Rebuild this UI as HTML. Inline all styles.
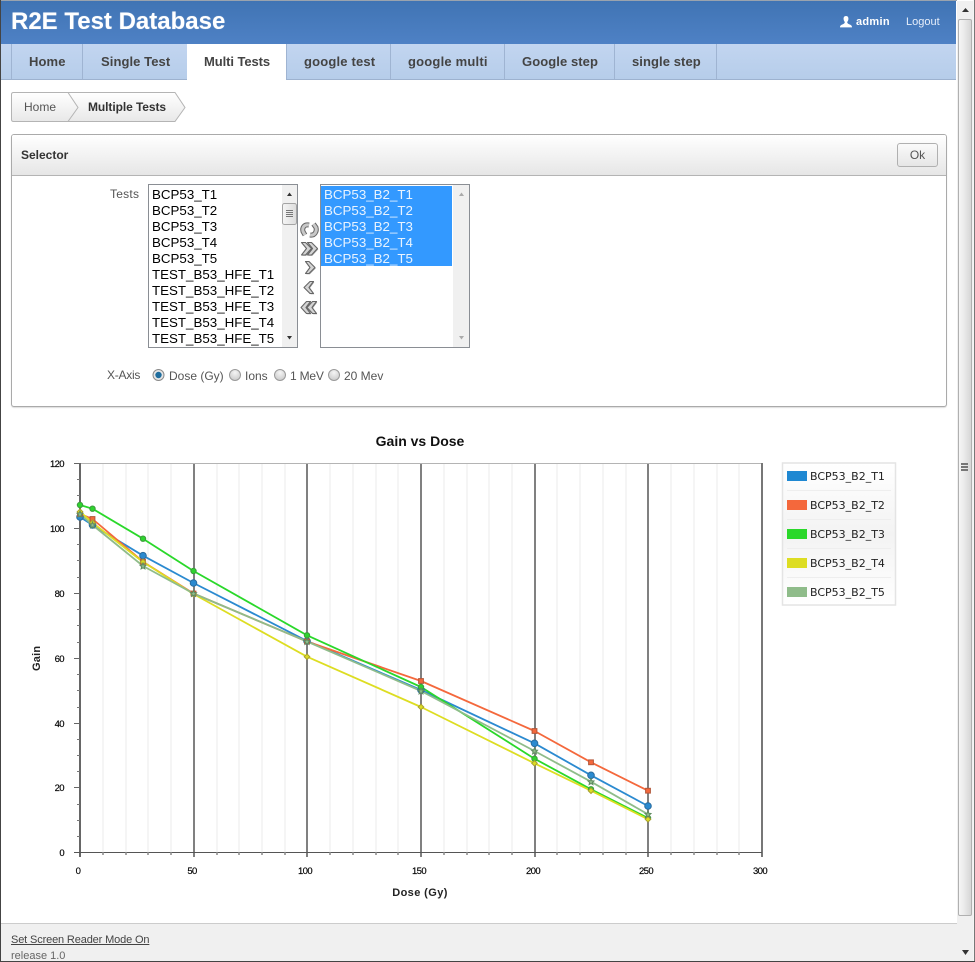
<!DOCTYPE html>
<html><head><meta charset="utf-8"><title>R2E Test Database</title>
<style>
html,body{margin:0;padding:0;background:#fff;width:975px;height:962px;overflow:hidden;font-family:"Liberation Sans",sans-serif}
div,span,a{position:absolute;white-space:nowrap;box-sizing:border-box}
.tab{top:44px;height:36px;line-height:36px;font-size:13px;font-weight:bold;color:#444;text-align:left;border-right:1px solid #9fb4d2}
.li{font-size:13.33px;line-height:16px;color:#000;left:4px}
.sb{background:#f0f0f0;top:1px;bottom:1px;width:16px}
.lbl{font-size:12px;color:#555;line-height:14px}
</style></head><body>
<div style="left:0;top:0;width:975px;height:962px;overflow:hidden">
<div style="left:0;top:0;width:957px;height:1px;background:#9aa3ae"></div>
<div style="left:1px;top:1px;width:955px;height:43px;background:linear-gradient(#4074b4,#4e81c5)"></div>
<div style="left:11px;top:8px;font-size:24px;line-height:28px;font-weight:bold;color:#fff;text-shadow:0 0 1px rgba(255,255,255,.4)">R2E Test Database</div>
<svg style="position:absolute;left:839px;top:15px" width="14" height="14" viewBox="0 0 14 14"><path d="M7 1C5 1 4.400 2.600 4.600 4.200C4.800 5.600 5.400 6.400 5.800 7C5.800 8.400 4.600 9 3 9.600C2 10 1 10.600 1 12.400H13C13 10.600 12 10 11 9.600C9.400 9 8.200 8.400 8.200 7C8.600 6.400 9.200 5.600 9.400 4.200C9.600 2.600 9 1 7 1Z" fill="#fff"/></svg>
<div style="left:856px;top:15px;font-size:11px;line-height:14px;font-weight:bold;color:#fff;letter-spacing:.3px">admin</div>
<div style="left:906px;top:15px;font-size:11px;line-height:14px;color:#e6eefa">Logout</div>

<div style="left:1px;top:44px;width:955px;height:36px;background:linear-gradient(#c2d5f0,#b6cdea);border-bottom:1px solid #9db2cf"></div>
<div style="left:11px;top:44px;width:1px;height:35px;background:#9fb4d2"></div>
<div class="tab" style="left:12px;width:71px;height:35px;padding-left:17px;letter-spacing:.1px">Home</div>
<div class="tab" style="left:83px;width:104px;height:35px;border-right:0;padding-left:18px;letter-spacing:.08px">Single Test</div>
<div class="tab" style="left:187px;width:99px;background:#fff;border-right:0;color:#444;padding-left:17px;letter-spacing:-.08px">Multi Tests</div>
<div class="tab" style="left:286px;width:105px;height:35px;border-left:1px solid #9fb4d2;padding-left:17px;letter-spacing:.18px">google test</div>
<div class="tab" style="left:391px;width:114px;height:35px;padding-left:17px;letter-spacing:.2px">google multi</div>
<div class="tab" style="left:505px;width:110px;height:35px;padding-left:17px;letter-spacing:.08px">Google step</div>
<div class="tab" style="left:615px;width:102px;height:35px;padding-left:17px;letter-spacing:.08px">single step</div>

<svg style="position:absolute;left:10px;top:91px" width="180" height="33" viewBox="0 0 180 33">
<defs><linearGradient id="bc" x1="0" y1="0" x2="0" y2="1"><stop offset="0" stop-color="#fff"/><stop offset="1" stop-color="#e8e8e8"/></linearGradient></defs>
<path d="M3.500 1.500H165L175 16.500L165 30.500H3.500Q1.500 30.500 1.500 28.500V3.500Q1.500 1.500 3.500 1.500Z" fill="url(#bc)" stroke="#b4b4b4"/>
<path d="M58 1.500L68 16.500L58 30.500" fill="none" stroke="#b4b4b4"/></svg>
<div style="left:24px;top:100px;font-size:12px;line-height:14px;color:#555">Home</div>
<div style="left:88px;top:100px;font-size:12px;line-height:14px;font-weight:bold;color:#333;letter-spacing:-.08px">Multiple Tests</div>

<div style="left:11px;top:134px;width:936px;height:273px;border:1px solid #aaa;border-radius:3px;box-shadow:0 1px 1px #ddd;background:#fff"></div>
<div style="left:12px;top:135px;width:934px;height:41px;background:linear-gradient(#fff,#e6e6e6);border-bottom:1px solid #b4b4b4;border-radius:2px 2px 0 0"></div>
<div style="left:21px;top:148px;font-size:12px;line-height:14px;font-weight:bold;color:#333">Selector</div>
<div style="left:897px;top:143px;width:41px;height:24px;border:1px solid #b0b0b0;border-radius:3px;background:linear-gradient(#fafafa,#e6e6e6);font-size:12px;line-height:22px;text-align:center;color:#555">Ok</div>

<div class="lbl" style="left:110px;top:187px;letter-spacing:.25px">Tests</div>
<div style="left:148px;top:184px;width:150px;height:164px;border:1px solid #8a8e94;background:#fff;overflow:hidden">
<div style="left:0;top:2px;width:133px;height:160px">
<div class="li" style="top:0;left:3px">BCP53_T1</div><div class="li" style="top:16px;left:3px">BCP53_T2</div><div class="li" style="top:32px;left:3px">BCP53_T3</div><div class="li" style="top:48px;left:3px">BCP53_T4</div><div class="li" style="top:64px;left:3px">BCP53_T5</div><div class="li" style="top:80px;left:3px">TEST_B53_HFE_T1</div><div class="li" style="top:96px;left:3px">TEST_B53_HFE_T2</div><div class="li" style="top:112px;left:3px">TEST_B53_HFE_T3</div><div class="li" style="top:128px;left:3px">TEST_B53_HFE_T4</div><div class="li" style="top:144px;left:3px">TEST_B53_HFE_T5</div>
</div>
<div style="left:133px;top:0;width:15px;height:162px;background:#f0f0f0"></div>
<svg style="position:absolute;left:133px;top:0" width="15" height="162"><defs><linearGradient id="th" x1="0" y1="0" x2="1" y2="0"><stop offset="0" stop-color="#f6f6f6"/><stop offset="1" stop-color="#dcdcdc"/></linearGradient></defs><path d="M5 11L7.500 7.500L10 11Z" fill="#333"/><path d="M5 151L7.500 154.500L10 151Z" fill="#333"/>
<rect x="0.500" y="18.500" width="14" height="21" rx="2" fill="url(#th)" stroke="#a4a4a4"/><path d="M4 25.500H11M4 27.500H11M4 29.500H11M4 31.500H11" stroke="#777"/></svg>
</div>
<div style="left:320px;top:184px;width:150px;height:164px;border:1px solid #8a8e94;background:#fff;overflow:hidden">
<div style="left:0;top:1px;width:131px;height:80px;background:#3399ff"></div>
<div class="li" style="top:2px;left:3px;color:#e8f3ff">BCP53_B2_T1</div><div class="li" style="top:18px;left:3px;color:#e8f3ff">BCP53_B2_T2</div><div class="li" style="top:34px;left:3px;color:#e8f3ff">BCP53_B2_T3</div><div class="li" style="top:50px;left:3px;color:#e8f3ff">BCP53_B2_T4</div><div class="li" style="top:66px;left:3px;color:#e8f3ff">BCP53_B2_T5</div>
<div style="left:132px;top:0;width:16px;height:162px;background:#f0f0f0"></div>
<svg style="position:absolute;left:133px;top:0" width="15" height="162"><path d="M5 11L7.500 7.500L10 11Z" fill="#aaa"/><path d="M5 151L7.500 154.500L10 151Z" fill="#aaa"/></svg>
</div>

<svg style="position:absolute;left:298px;top:220px" width="24" height="100" viewBox="0 0 24 100">
<g fill="none" stroke-linejoin="miter">
<path d="M11 5C6 4 4 8 5 11.500L7 15" stroke="#666" stroke-width="5"/>
<path d="M12 15C17 16 19 11 18 7.500L15.500 4" stroke="#666" stroke-width="5"/>
<path d="M11 5C6 4 4 8 5 11.500L7 15" stroke="#c8c8c8" stroke-width="3"/>
<path d="M12 15C17 16 19 11 18 7.500L15.500 4" stroke="#c8c8c8" stroke-width="3"/>
</g>
<g fill="#999" transform="translate(.8,.8)">
<path d="M3.500 22.500H7.500L13.500 28.500L7.500 35H3.500L8.500 28.500Z"/><path d="M9.500 22.500H13.500L19.500 28.500L13.500 35H9.500L14.500 28.500Z"/>
<path d="M7.500 41.500H11L17 47.500L11 53.500H7.500L12 47.500Z"/>
<path d="M15.500 61.500H12L6 67.500L12 73.500H15.500L11 67.500Z"/>
<path d="M12.500 81.500H8.500L3 87.500L8.500 93.500H12.500L8 87.500Z"/><path d="M18.500 81.500H14.500L9 87.500L14.500 93.500H18.500L14 87.500Z"/>
</g>
<g fill="#d4d4d4" stroke="#666" stroke-width="1.100" stroke-linejoin="round">
<path d="M3.500 22.500H7.500L13.500 28.500L7.500 35H3.500L8.500 28.500Z"/><path d="M9.500 22.500H13.500L19.500 28.500L13.500 35H9.500L14.500 28.500Z"/>
<path d="M7.500 41.500H11L17 47.500L11 53.500H7.500L12 47.500Z"/>
<path d="M15.500 61.500H12L6 67.500L12 73.500H15.500L11 67.500Z"/>
<path d="M12.500 81.500H8.500L3 87.500L8.500 93.500H12.500L8 87.500Z"/><path d="M18.500 81.500H14.500L9 87.500L14.500 93.500H18.500L14 87.500Z"/>
</g></svg>

<div class="lbl" style="left:107px;top:368px;letter-spacing:-.25px">X-Axis</div>
<svg style="position:absolute;left:150px;top:365px" width="200" height="20">
<defs><radialGradient id="rg" cx=".5" cy=".3" r=".8"><stop offset="0" stop-color="#f5f5f5"/><stop offset="1" stop-color="#c4c4c4"/></radialGradient></defs>
<circle cx="8.500" cy="10" r="5.500" fill="#e6e6e6" stroke="#8a8a8a"/><circle cx="8.500" cy="10" r="3.200" fill="#1f6d9e"/>
<circle cx="85" cy="10" r="5.500" fill="url(#rg)" stroke="#9a9a9a"/>
<circle cx="130" cy="10" r="5.500" fill="url(#rg)" stroke="#9a9a9a"/>
<circle cx="184" cy="10" r="5.500" fill="url(#rg)" stroke="#9a9a9a"/></svg>
<div class="lbl" style="left:169px;top:369px">Dose (Gy)</div>
<div class="lbl" style="left:245px;top:369px">Ions</div>
<div class="lbl" style="left:290px;top:369px;letter-spacing:-.2px">1 MeV</div>
<div class="lbl" style="left:344px;top:369px">20 Mev</div>

<svg style="position:absolute;left:0;top:425px" width="780" height="490" viewBox="0 425 780 490" font-family="'Liberation Sans',sans-serif">
<defs>
<circle id="m1" r="3.300" fill="#2b8ad0" stroke="#2a6c9e"/>
<rect id="m2" x="-2.400" y="-2.400" width="4.800" height="4.800" fill="#f4683c" stroke="#b3573a"/>
<circle id="m3" r="2.700" fill="#2ed42e" stroke="#3d9a3d"/>
<path id="m4" d="M0-2.800L2.800 0L0 2.800L-2.800 0Z" fill="#dddd22" stroke="#a8a030"/>
<path id="m5" d="M0-3L.9-1L3-.75L1.400 .75L1.900 2.900L0 1.800L-1.900 2.900L-1.400 .75L-3-.75L-.9-1Z" fill="#8fbc8a" stroke="#5e8a60"/>
</defs>
<path d="M103 464V852M126 464V852M148 464V852M171 464V852M217 464V852M239 464V852M262 464V852M285 464V852M330 464V852M353 464V852M376 464V852M398 464V852M444 464V852M467 464V852M489 464V852M512 464V852M557 464V852M580 464V852M603 464V852M626 464V852M671 464V852M694 464V852M717 464V852M739 464V852" stroke="#f5f5f5" stroke-width="2" fill="none"/>
<path d="M80 463.500H762" stroke="#b4b4b4" stroke-width="1"/>
<path d="M194 464V857M307 464V857M421 464V857M535 464V857M648 464V857" stroke="#808080" stroke-width="2"/>
<path d="M762 463V857" stroke="#777" stroke-width="2"/>
<path d="M80 463V857" stroke="#666" stroke-width="2"/>
<path d="M74 852.500H762" stroke="#555" stroke-width="1"/>
<path d="M103 852V855M126 852V855M148 852V855M171 852V855M217 852V855M239 852V855M262 852V855M285 852V855M330 852V855M353 852V855M376 852V855M398 852V855M444 852V855M467 852V855M489 852V855M512 852V855M557 852V855M580 852V855M603 852V855M626 852V855M671 852V855M694 852V855M717 852V855M739 852V855" stroke="#888" stroke-width="1.500"/>
<path d="M74 463.500H80M74 528.500H80M74 593.500H80M74 658.500H80M74 723.500H80M74 787.500H80" stroke="#666" stroke-width="1"/>
<path d="M77 479.500H80M77 495.500H80M77 512.500H80M77 544.500H80M77 560.500H80M77 577.500H80M77 609.500H80M77 625.500H80M77 642.500H80M77 674.500H80M77 690.500H80M77 707.500H80M77 739.500H80M77 755.500H80M77 771.500H80M77 804.500H80M77 820.500H80M77 836.500H80" stroke="#777" stroke-width="1"/>

<g fill="none" stroke-width="1.800" stroke-linejoin="round">
<polyline stroke="#2b8ad0" points="80,517 92.500,525 143,555.700 193.500,583 307,641 421,690 534.500,743.300 591,775.300 648,806"/>
<polyline stroke="#f4683c" points="80,514 92.500,519 143,561.700 193.500,593.500 307,641.500 421,681 534.500,731 591,762.300 648,790.700"/>
<polyline stroke="#2ad82a" points="80,505 92.500,508.700 143,538.700 193.500,571 307,635.300 421,687 534.500,758.700 591,789.300 648,818"/>
<polyline stroke="#dddd22" points="80,511.700 92.500,522.700 143,562 193.500,594 307,656.700 421,707 534.500,763.300 591,790.700 648,819.300"/>
<polyline stroke="#8fbc8a" points="80,514 92.500,525 143,566 193.500,593.500 307,641.500 421,691 534.500,751 591,781.700 648,814.300"/>
</g>
<g>
<use href="#m1" x="80" y="517"/><use href="#m1" x="92.500" y="525"/><use href="#m1" x="143" y="555.700"/><use href="#m1" x="193.500" y="583"/><use href="#m1" x="307" y="641"/><use href="#m1" x="421" y="690"/><use href="#m1" x="534.500" y="743.300"/><use href="#m1" x="591" y="775.300"/><use href="#m1" x="648" y="806"/>
<use href="#m2" x="80" y="514"/><use href="#m2" x="92.500" y="519"/><use href="#m2" x="143" y="561.700"/><use href="#m2" x="193.500" y="593.500"/><use href="#m2" x="307" y="641.500"/><use href="#m2" x="421" y="681"/><use href="#m2" x="534.500" y="731"/><use href="#m2" x="591" y="762.300"/><use href="#m2" x="648" y="790.700"/>
<use href="#m3" x="80" y="505"/><use href="#m3" x="92.500" y="508.700"/><use href="#m3" x="143" y="538.700"/><use href="#m3" x="193.500" y="571"/><use href="#m3" x="307" y="635.300"/><use href="#m3" x="421" y="687"/><use href="#m3" x="534.500" y="758.700"/><use href="#m3" x="591" y="789.300"/><use href="#m3" x="648" y="818"/>
<use href="#m4" x="80" y="511.700"/><use href="#m4" x="92.500" y="522.700"/><use href="#m4" x="143" y="562"/><use href="#m4" x="193.500" y="594"/><use href="#m4" x="307" y="656.700"/><use href="#m4" x="421" y="707"/><use href="#m4" x="534.500" y="763.300"/><use href="#m4" x="591" y="790.700"/><use href="#m4" x="648" y="819.300"/>
<use href="#m5" x="80" y="514"/><use href="#m5" x="92.500" y="525"/><use href="#m5" x="143" y="566"/><use href="#m5" x="193.500" y="593.500"/><use href="#m5" x="307" y="641.500"/><use href="#m5" x="421" y="691"/><use href="#m5" x="534.500" y="751"/><use href="#m5" x="591" y="781.700"/><use href="#m5" x="648" y="814.300"/>
</g>
<text x="420" y="446" text-anchor="middle" font-size="14" font-weight="bold" fill="#111">Gain vs Dose</text>
<g font-size="9.500" fill="#000" stroke="#000" stroke-width=".15" text-anchor="end" style="letter-spacing:-.6px">
<text x="64" y="467">120</text><text x="64" y="532">100</text><text x="64" y="597">80</text><text x="64" y="662">60</text><text x="64" y="727">40</text><text x="64" y="791">20</text><text x="64" y="856">0</text>
</g>
<g font-size="9.500" fill="#000" stroke="#000" stroke-width=".15" text-anchor="middle" style="letter-spacing:-.6px">
<text x="78" y="874">0</text><text x="192" y="874">50</text><text x="305" y="874">100</text><text x="419" y="874">150</text><text x="533" y="874">200</text><text x="646" y="874">250</text><text x="760" y="874">300</text>
</g>
<text x="420" y="896" text-anchor="middle" font-size="11" font-weight="bold" fill="#222" style="letter-spacing:.4px">Dose (Gy)</text>
<text transform="translate(40,671) rotate(-90)" x="0" y="0" font-size="11" font-weight="bold" fill="#222" style="letter-spacing:.2px">Gain</text>
</svg>

<svg style="position:absolute;left:781px;top:462px" width="116" height="144" viewBox="781 462 116 144" font-family="'DejaVu Sans',sans-serif" font-size="11" fill="#222">
<defs><linearGradient id="lg" x1="0" y1="0" x2="0" y2="1"><stop offset="0" stop-color="#fff"/><stop offset=".5" stop-color="#f3f3f3"/><stop offset="1" stop-color="#fff"/></linearGradient></defs>
<rect x="782.500" y="463" width="113" height="142" fill="url(#lg)" stroke="#e4e4e4" stroke-width="1.500"/>
<path d="M787 490.500H891M787 519.500H891M787 548.500H891M787 577.500H891" stroke="#eee"/>
<rect x="787" y="471" width="20" height="10" fill="#1f88d2"/><text x="810" y="480">BCP53_B2_T1</text>
<rect x="787" y="500" width="20" height="10" fill="#f4683c"/><text x="810" y="509">BCP53_B2_T2</text>
<rect x="787" y="529" width="20" height="10" fill="#2ad82a"/><text x="810" y="538">BCP53_B2_T3</text>
<rect x="787" y="558" width="20" height="10" fill="#dddd22"/><text x="810" y="567">BCP53_B2_T4</text>
<rect x="787" y="587" width="20" height="10" fill="#8fbc8a"/><text x="810" y="596">BCP53_B2_T5</text>
</svg>

<div style="left:1px;top:923px;width:956px;height:38px;background:#f0f0f0;border-top:1px solid #ccc;overflow:hidden">
<a style="left:10px;top:9px;font-size:11px;line-height:14px;color:#444;text-decoration:underline;letter-spacing:-.14px">Set Screen Reader Mode On</a>
<div style="left:10px;top:25px;font-size:11px;line-height:14px;color:#666">release 1.0</div>
</div>

<div style="left:957px;top:1px;width:16px;height:960px;background:#f0f0f0"></div>
<div style="left:958px;top:19px;width:14px;height:897px;border:1px solid #b0b0b0;border-radius:2px;background:linear-gradient(90deg,#f6f6f6,#ebebeb 40%,#d6d6d6)"></div>
<svg style="position:absolute;left:957px;top:1px" width="16" height="960"><path d="M5 11L8.500 7L12 11Z" fill="#333"/><path d="M5 949L8.500 954L12 949Z" fill="#333"/>
<path d="M4 463H11M4 466H11M4 469H11" stroke="#777" stroke-width="2"/></svg>
<div style="left:973px;top:0;width:2px;height:962px;background:#f5f5f5"></div>
<div style="left:974px;top:0;width:1px;height:962px;background:#777"></div>
<div style="left:0;top:0;width:1px;height:962px;background:#444"></div>
<div style="left:0;top:961px;width:975px;height:1px;background:#444"></div>
</div>
</body></html>
